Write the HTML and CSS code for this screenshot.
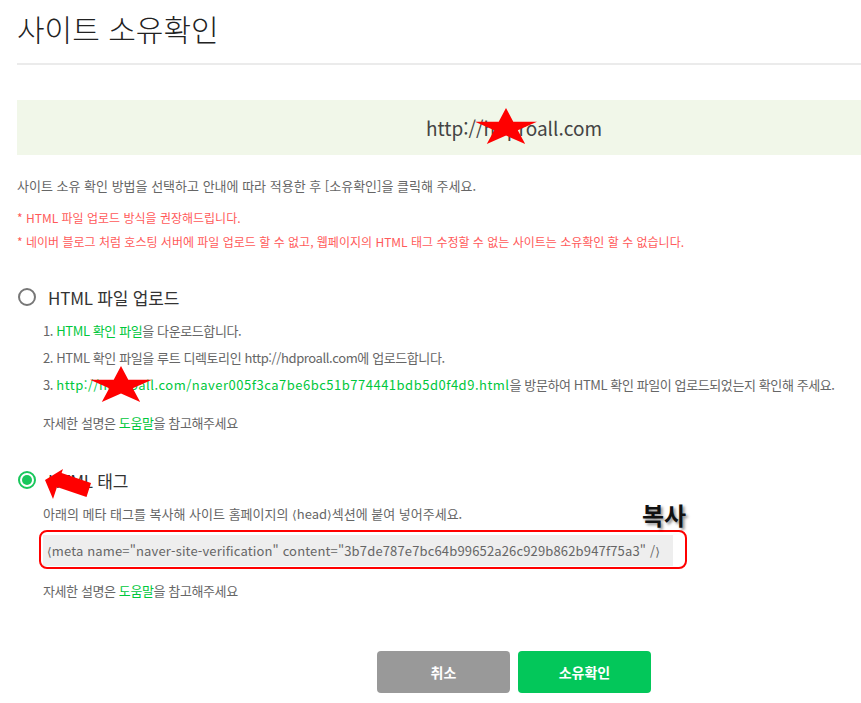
FILE: index.html
```html
<!DOCTYPE html>
<html lang="ko">
<head>
<meta charset="utf-8">
<title>사이트 소유확인</title>
<link rel="stylesheet" href="styles.css">
</head>
<body>
<div class="page">
  <h1 class="title">사이트 소유확인</h1>
  <div class="rule"></div>

  <div class="site-box">http://hdproall.com</div>

  <p class="desc">사이트 소유 확인 방법을 선택하고 안내에 따라 적용한 후 [소유확인]을 클릭해 주세요.</p>
  <div class="notes">
    <p class="note">* HTML 파일 업로드 방식을 권장해드립니다.</p>
    <p class="note">* 네이버 블로그 처럼 호스팅 서버에 파일 업로드 할 수 없고, 웹페이지의 HTML 태그 수정할 수 없는 사이트는 소유확인 할 수 없습니다.</p>
  </div>

  <div class="option option-first">
    <label class="radio-row"><span class="radio"></span><span class="radio-label">HTML 파일 업로드</span></label>
    <ol class="steps">
      <li>1. <span class="green">HTML 확인 파일</span>을 다운로드합니다.</li>
      <li>2. HTML 확인 파일을 루트 디렉토리인 http://hdproall.com에 업로드합니다.</li>
      <li>3. <span class="green url">http://hdproall.com/naver005f3ca7be6bc51b774441bdb5d0f4d9.html</span>을 방문하여 HTML 확인 파일이 업로드되었는지 확인해 주세요.</li>
    </ol>
    <p class="help">자세한 설명은 <span class="green">도움말</span>을 참고해주세요</p>
  </div>

  <div class="option option-second">
    <label class="radio-row"><span class="radio radio-on"></span><span class="radio-label">HTML 태그</span></label>
    <p class="desc2">아래의 메타 태그를 복사해 사이트 홈페이지의 <span class="ang">⟨</span>head<span class="ang">⟩</span>섹션에 붙여 넣어주세요.</p>
    <div class="meta-wrap">
      <div class="meta-code"><span class="ang">⟨</span>meta name="naver-site-verification" content="3b7de787e7bc64b99652a26c929b862b947f75a3" /<span class="ang">⟩</span></div>
      <div class="meta-mark"></div>
      <div class="copy-label">복사</div>
    </div>
    <p class="help help2">자세한 설명은 <span class="green">도움말</span>을 참고해주세요</p>
  </div>

  <div class="buttons">
    <button class="btn btn-cancel">취소</button>
    <button class="btn btn-ok">소유확인</button>
  </div>

  <svg class="star star-1" viewBox="0 0 62 36" width="62" height="36"><polygon points="31,0 38.3,13.75 62,13.75 42.8,22.25 50.2,36 31,27.5 11.8,36 19.2,22.25 0,13.75 23.7,13.75" fill="#ff0000"/></svg>
  <svg class="star star-2" viewBox="0 0 62 36" width="62" height="36"><polygon points="31,0 38.3,13.75 62,13.75 42.8,22.25 50.2,36 31,27.5 11.8,36 19.2,22.25 0,13.75 23.7,13.75" fill="#ff0000"/></svg>
  <svg class="arrow" viewBox="0 0 48 33" width="48" height="33"><polygon points="1,13 19,2 17.6,6 47,16 42.5,30 13,20 9,32" fill="#ff0000"/></svg>
</div>
</body>
</html>
```

FILE: styles.css
```css
html, body {
  margin: 0;
  padding: 0;
  background: #ffffff;
  overflow: hidden;
}

body {
  font-family: "Noto Sans CJK KR", "Noto Sans", sans-serif;
  color: #666666;
}

.page {
  position: relative;
  width: 994px;
  margin-left: 17px;
}

.title {
  margin: 0;
  padding-top: 10px;
  font-size: 30px;
  line-height: 36px;
  font-weight: 300;
  color: #222222;
}

.rule {
  margin-top: 17px;
  height: 2px;
  background: #ebebeb;
}

.site-box {
  margin-top: 35px;
  height: 55px;
  line-height: 55px;
  background: #f1f7e9;
  text-align: center;
  font-size: 19px;
  color: #444444;
}

p {
  margin: 0;
}

.desc {
  margin-top: 21px;
  font-size: 13px;
  line-height: 20px;
}

.notes {
  margin-top: 10px;
}

.note {
  font-size: 12px;
  line-height: 24px;
  color: #ff5a5a;
}

.option-first {
  margin-top: 31px;
}

.option-second {
  margin-top: 35px;
}

.radio-row {
  display: flex;
  align-items: center;
  height: 24px;
}

.radio {
  box-sizing: border-box;
  width: 18px;
  height: 18px;
  margin-left: 1px;
  border: 2px solid #777777;
  border-radius: 50%;
  background: #ffffff;
  position: relative;
}

.radio-on {
  border-color: #19c75c;
}

.radio-on::after {
  content: "";
  position: absolute;
  left: 2px;
  top: 2px;
  width: 10px;
  height: 10px;
  border-radius: 50%;
  background: #19c75c;
}

.radio-label {
  margin-left: 12px;
  font-size: 17px;
  color: #333333;
  letter-spacing: -0.2px;
}

.steps {
  list-style: none;
  margin: 8px 0 0 0;
  padding-left: 26px;
}

.steps li {
  font-size: 13px;
  line-height: 27px;
  letter-spacing: -0.4px;
}

.green {
  color: #00c73c;
}

.url {
  letter-spacing: 0.5px;
}

.ang {
  font-family: "DejaVu Sans", sans-serif;
  font-size: 12px;
}

.help {
  margin-top: 15px;
  padding-left: 26px;
  font-size: 13px;
  line-height: 20px;
  letter-spacing: -0.4px;
}

.desc2 {
  margin-top: 12px;
  padding-left: 26px;
  font-size: 13px;
  line-height: 20px;
}

.meta-wrap {
  position: relative;
  margin-top: 10px;
  margin-left: 26px;
  width: 630px;
}

.meta-code {
  height: 31px;
  line-height: 31px;
  padding-left: 4px;
  background: #eeeeee;
  font-size: 13px;
  color: #666666;
  letter-spacing: 0.15px;
  white-space: nowrap;
}

.meta-mark {
  position: absolute;
  left: -4px;
  top: -5px;
  right: -14px;
  bottom: -3px;
  border: 2px solid #ff0000;
  border-radius: 8px;
}

.copy-label {
  position: absolute;
  left: 599px;
  top: -35px;
  font-size: 24px;
  line-height: 30px;
  font-weight: 700;
  color: #111111;
  text-shadow: 2px 2px 3px rgba(0, 0, 0, 0.45);
  white-space: nowrap;
}

.help2 {
  margin-top: 15px;
}

.buttons {
  display: flex;
  justify-content: center;
  gap: 8px;
  margin-top: 50px;
}

.btn {
  width: 133px;
  height: 42px;
  border: none;
  border-radius: 4px;
  font-family: "Noto Sans CJK KR", sans-serif;
  font-size: 14px;
  font-weight: 700;
  color: #ffffff;
}

.btn-cancel {
  background: #999999;
}

.btn-ok {
  background: #03c75a;
}

.star, .arrow {
  position: absolute;
}

.star-1 {
  left: 458px;
  top: 108px;
}

.star-2 {
  left: 73px;
  top: 366px;
}

.arrow {
  left: 27px;
  top: 467px;
}
```
